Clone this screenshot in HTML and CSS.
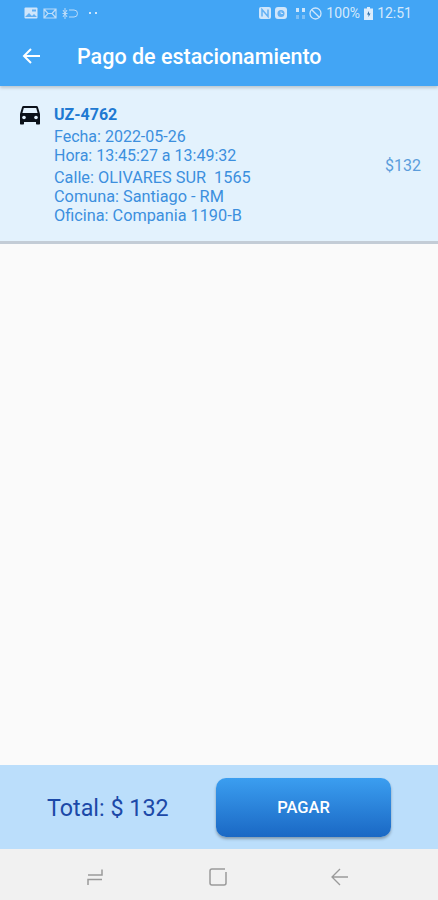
FILE: index.html
```html
<!DOCTYPE html>
<html>

<head>
  <meta charset="UTF-8">
  <meta name="viewport" content="width=device-width, initial-scale=1.0">
  <link rel="stylesheet" href="styles.css">
</head>

<body>
  <div class="screen">
    <header class="top-bar">
      <div class="status-bar">
        <div class="status-left">
          <svg width="14" height="12" viewBox="0 0 14 12">
            <rect x="0.500" y="0.500" width="13" height="11" rx="1" fill="#cfe6fb" />
            <path d="M1 10l4-4 3 3 2-2 3 3z" fill="#62b0f4" />
            <rect x="8" y="2.500" width="4" height="2" fill="#62b0f4" />
          </svg>
          <svg width="14" height="11" viewBox="0 0 14 11" fill="none" stroke="#bcdcf9" stroke-width="1.200">
            <path d="M1 1h12v9H1zM1 1l4 4.500-4 4.500M13 1L9 5.500l4 4.500M5 5.500h4" />
          </svg>
          <svg width="16" height="13" viewBox="0 0 16 13" fill="none" stroke="#bcdcf9" stroke-width="1">
            <path d="M7 3h5a3.500 3.500 0 0 1 0 7H7" />
            <path d="M0.500 6.500h5M3 1v11M1 3l4 7M5 3l-4 7" />
          </svg>
          <span class="st-dots"></span>
        </div>
        <div class="status-right">
          <svg width="12" height="12" viewBox="0 0 12 12">
            <rect width="12" height="12" rx="2" fill="#cfe6fb" />
            <path d="M3 9.500v-7l6 7v-7" fill="none" stroke="#62b0f4" stroke-width="1.500" />
          </svg>
          <svg width="12" height="12" viewBox="0 0 12 12">
            <rect width="12" height="12" rx="3" fill="#cfe6fb" />
            <circle cx="6" cy="6.500" r="3.500" fill="#62b0f4" />
            <path d="M6 4.500v2h2" fill="none" stroke="#cfe6fb" />
          </svg>
          <span class="st-signal"></span>
          <svg width="13" height="13" viewBox="0 0 13 13" fill="none" stroke="#cfe6fb" stroke-width="1.300">
            <circle cx="6.500" cy="6.500" r="5.500" />
            <path d="M2.700 2.700l7.600 7.600" />
          </svg>
          <span class="st-text">100%</span>
          <svg width="9" height="13" viewBox="0 0 9 13">
            <path d="M3 0h3v1.500h3V13H0V1.500h3z" fill="#dbecfc" />
            <path d="M5 4L3 7.500h1.500V10l2-3.500H5z" fill="#2f6fa8" />
          </svg>
          <span class="st-text">12:51</span>
        </div>
      </div>
      <div class="title-row">
        <svg class="back-arrow" width="18" height="16" viewBox="0 0 18 16" fill="none" stroke="#fff" stroke-width="2">
          <path d="M18 8H2M9 1L2 8l7 7" />
        </svg>
        <h1>Pago de estacionamiento</h1>
      </div>
    </header>

    <div class="ticket">
      <svg class="car" width="22" height="20" viewBox="0 0 22 20">
        <path d="M4.500 1h13c.7 0 1.200.4 1.400 1L21 9v9.500c0 .6-.4 1-1 1h-2c-.6 0-1-.4-1-1V17H5v1.500c0 .6-.4 1-1 1H2c-.6 0-1-.4-1-1V9l2.100-7c.2-.6.7-1 1.400-1z" fill="#0b1119" />
        <path d="M4.800 3h12.400l1.400 5H3.400z" fill="#e3f2fd" />
        <circle cx="5" cy="12.500" r="1.800" fill="#e3f2fd" />
        <circle cx="17" cy="12.500" r="1.800" fill="#e3f2fd" />
      </svg>
      <div class="ticket-info">
        <div class="plate">UZ-4762</div>
        <div class="time-lines">
          <div>Fecha: 2022-05-26</div>
          <div>Hora: 13:45:27 a 13:49:32</div>
        </div>
        <div class="place-lines">
          <div>Calle: OLIVARES SUR&nbsp; 1565</div>
          <div>Comuna: Santiago - RM</div>
          <div>Oficina: Compania 1190-B</div>
        </div>
      </div>
      <div class="amount">$132</div>
    </div>

    <main class="empty-area"></main>

    <div class="pay-bar">
      <div class="total">Total: $ 132</div>
      <button class="pay-btn">PAGAR</button>
    </div>

    <nav class="nav-bar">
      <svg width="20" height="20" viewBox="0 0 20 20" fill="none" stroke="#9a9a9a" stroke-width="1.500">
        <path d="M17 2.500v5.500H3M3 18v-5.500h14" />
      </svg>
      <svg width="20" height="20" viewBox="0 0 20 20" fill="none" stroke="#9a9a9a" stroke-width="1.500">
        <path d="M17 2H4a2 2 0 0 0-2 2v12a2 2 0 0 0 2 2h12a2 2 0 0 0 2-2V5" />
      </svg>
      <svg width="20" height="20" viewBox="0 0 20 20" fill="none" stroke="#9a9a9a" stroke-width="1.300">
        <path d="M18 10H2M10 2l-8 8 8 8" />
      </svg>
    </nav>
  </div>
</body>

</html>
```
FILE: styles.css
```css
* {
  box-sizing: border-box;
}

html,
body {
  margin: 0;
  padding: 0;
}

body {
  font-family: Roboto, "Liberation Sans", sans-serif;
  background-color: #fafafa;
}

.screen {
  width: 438px;
  height: 900px;
  display: flex;
  flex-direction: column;
  overflow: hidden;
}

/* Barra superior */
.top-bar {
  height: 86px;
  background-color: #42a5f5;
  box-shadow: 0 2px 3px rgba(0, 0, 0, 0.18);
  position: relative;
  z-index: 2;
}

.status-bar {
  height: 26px;
  padding: 0 26px 0 24px;
  display: flex;
  align-items: center;
  justify-content: space-between;
}

.status-left,
.status-right {
  display: flex;
  align-items: center;
}

.status-left {
  gap: 5px;
}

.status-right {
  gap: 4px;
}

.st-dots {
  width: 8px;
  height: 2px;
  margin-left: 6px;
  background: linear-gradient(90deg, #cfe6fb 0 2px, transparent 2px 6px, #cfe6fb 6px);
}

.st-signal {
  width: 9px;
  height: 11px;
  margin-left: 5px;
  background:
    linear-gradient(90deg, #cfe6fb 0 3px, transparent 3px 6px, #cfe6fb 6px) top / 9px 4px no-repeat,
    linear-gradient(90deg, #7fbff5 0 3px, transparent 3px 6px, #7fbff5 6px) bottom / 9px 4px no-repeat;
}

.st-text {
  font-size: 14px;
  color: #d5e9fb;
}

.title-row {
  height: 60px;
  padding-left: 22px;
  display: flex;
  align-items: center;
}

.back-arrow {
  flex: none;
}

h1 {
  margin: 0 0 0 37px;
  font-size: 21.500px;
  font-weight: 500;
  color: #fff;
}

/* Tarjeta del ticket */
.ticket {
  height: 158px;
  padding: 19px 17px 0 19px;
  background-color: #e3f2fd;
  border-bottom: 3px solid #c3ccd6;
  display: flex;
  align-items: flex-start;
  color: #3c8fde;
  font-size: 16px;
}

.car {
  flex: none;
}

.ticket-info {
  flex: 1;
  margin-left: 13px;
}

.plate {
  font-weight: 700;
  color: #2079d2;
  line-height: 20px;
}

.time-lines {
  margin-top: 2px;
  line-height: 19px;
}

.place-lines {
  margin-top: 3px;
  font-size: 16.300px;
  line-height: 19px;
}

.amount {
  align-self: center;
  margin-top: -15px;
  color: #5b9ddb;
}

.empty-area {
  flex: 1;
  background-color: #fafafa;
}

/* Barra de pago */
.pay-bar {
  height: 84px;
  padding: 1px 47px 0;
  background-color: #bbdefb;
  display: flex;
  align-items: center;
  justify-content: space-between;
}

.total {
  font-size: 23.300px;
  color: #1c49a8;
}

.pay-btn {
  width: 175px;
  height: 59px;
  border: none;
  border-radius: 10px;
  background: linear-gradient(180deg, #3b9ef0, #1a68c4);
  box-shadow: 0 2px 3px rgba(0, 0, 0, 0.3);
  color: #fff;
  font-family: inherit;
  font-size: 16.500px;
  font-weight: 500;
}

.nav-bar {
  height: 51px;
  padding: 4px 88px 0 85px;
  background-color: #f1f1f1;
  display: flex;
  align-items: center;
  justify-content: space-between;
}
```
